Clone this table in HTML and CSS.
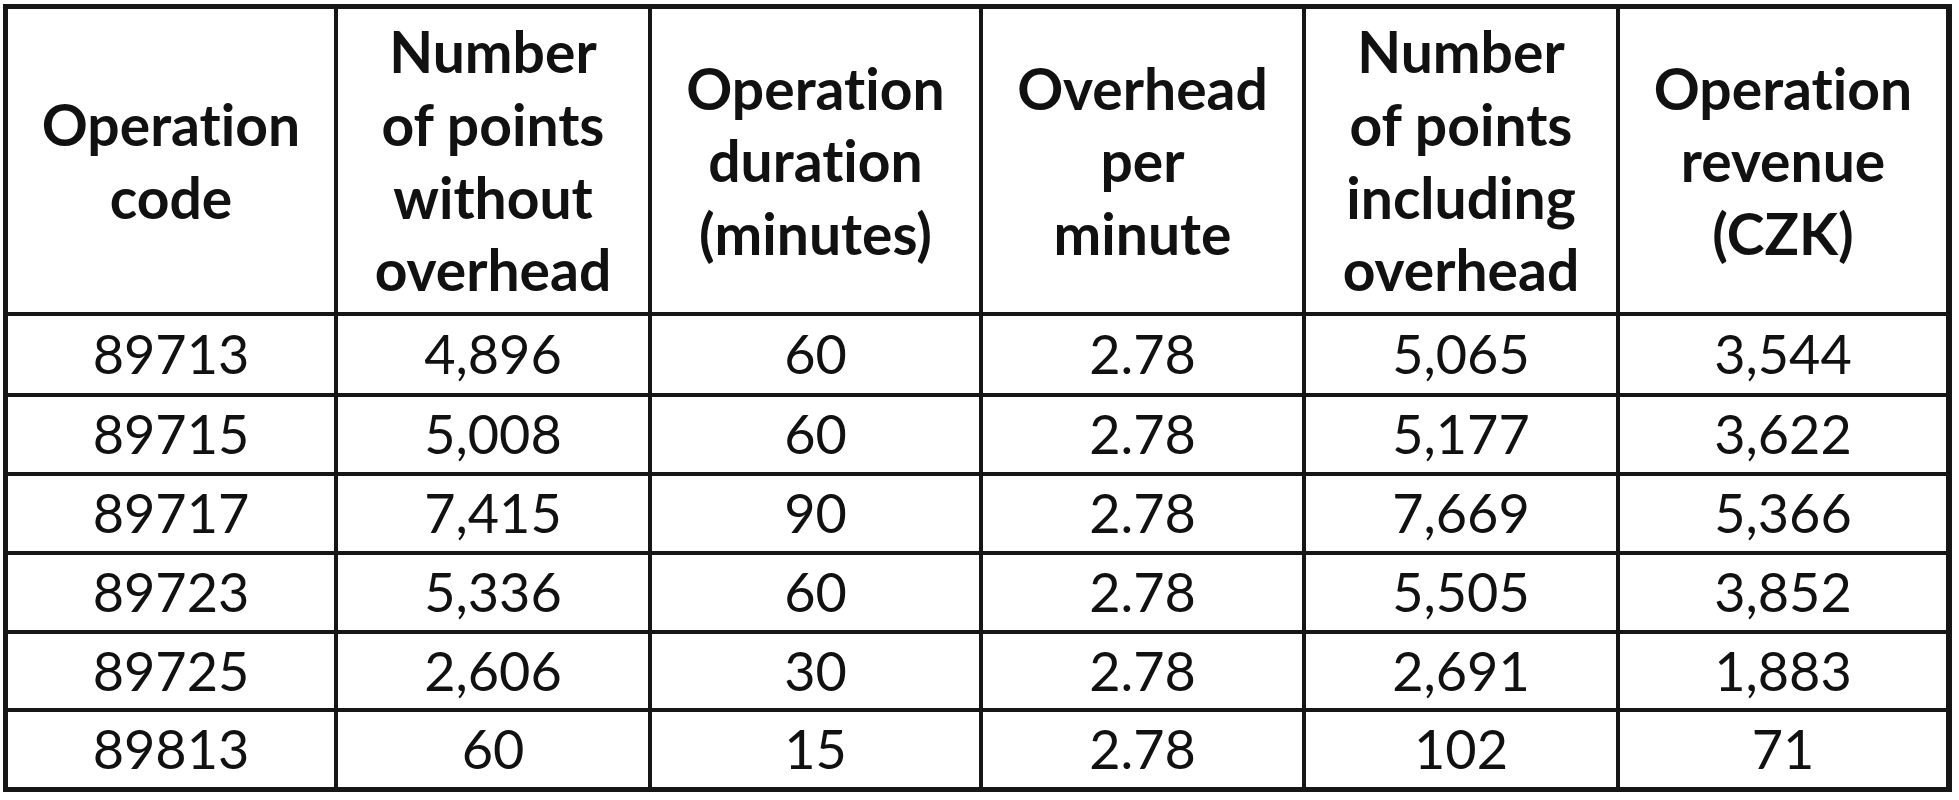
FILE: index.html
```html
<!DOCTYPE html>
<html lang="en">
<head>
<meta charset="utf-8">
<title>Operation table</title>
<link rel="stylesheet" href="styles.css">
</head>
<body>
<table class="ops">
  <colgroup>
    <col class="c1"><col class="c2"><col class="c3"><col class="c4"><col class="c5"><col class="c6">
  </colgroup>
  <thead>
    <tr class="head">
      <th>Operation<br>code</th>
      <th>Number<br>of points<br>without<br>overhead</th>
      <th>Operation<br>duration<br>(minutes)</th>
      <th>Overhead<br>per<br>minute</th>
      <th>Number<br>of points<br>including<br>overhead</th>
      <th class="last">Operation<br>revenue<br>(CZK)</th>
    </tr>
  </thead>
  <tbody>
    <tr class="r1"><td>89713</td><td>4,896</td><td>60</td><td>2.78</td><td>5,065</td><td class="last">3,544</td></tr>
    <tr class="r2"><td>89715</td><td>5,008</td><td>60</td><td>2.78</td><td>5,177</td><td class="last">3,622</td></tr>
    <tr class="r3"><td>89717</td><td>7,415</td><td>90</td><td>2.78</td><td>7,669</td><td class="last">5,366</td></tr>
    <tr class="r4"><td>89723</td><td>5,336</td><td>60</td><td>2.78</td><td>5,505</td><td class="last">3,852</td></tr>
    <tr class="r5"><td>89725</td><td>2,606</td><td>30</td><td>2.78</td><td>2,691</td><td class="last">1,883</td></tr>
    <tr class="r6"><td>89813</td><td>60</td><td>15</td><td>2.78</td><td>102</td><td class="last">71</td></tr>
  </tbody>
</table>
</body>
</html>
```
FILE: styles.css
```css
html, body {
  margin: 0;
  padding: 0;
  background: #ffffff;
}

body {
  padding: 4px 0 0 3px;
  font-family: Lato, "Liberation Sans", sans-serif;
  color: #111111;
}

.ops {
  border-collapse: separate;
  border-spacing: 0;
  table-layout: fixed;
  border-top: 5px solid #161616;
  border-left: 5px solid #161616;
  width: 1949px;
}

.ops th,
.ops td {
  border-right: 4px solid #161616;
  border-bottom: 4px solid #161616;
  padding: 0;
  text-align: center;
  vertical-align: middle;
  line-height: 72.6px;
  overflow: hidden;
  font-variant-ligatures: none;
  font-feature-settings: "liga" 0, "clig" 0;
}

.ops th {
  font-weight: 700;
  font-size: 57px;
}

.ops td {
  font-weight: 400;
  font-size: 54px;
}

.ops .last {
  border-right-width: 6px;
}

.ops .r6 td {
  border-bottom-width: 5px;
}

.c1 { width: 330px; }
.c2 { width: 314px; }
.c3 { width: 331px; }
.c4 { width: 323px; }
.c5 { width: 314px; }
.c6 { width: 332px; }

.head { height: 307px; }
.r1 { height: 81px; }
.r2 { height: 79px; }
.r3 { height: 79px; }
.r4 { height: 79px; }
.r5 { height: 78px; }
.r6 { height: 80px; }
```
